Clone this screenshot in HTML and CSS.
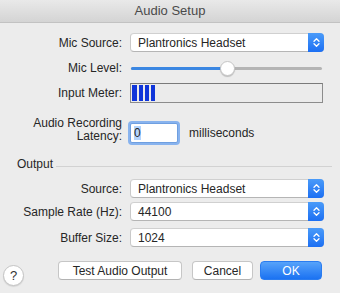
FILE: index.html
```html
<!DOCTYPE html>
<html lang="en">
<head>
    <meta charset="UTF-8">
    <meta name="viewport" content="width=device-width, initial-scale=1.0">
    <title>Audio Setup</title>
    <link rel="stylesheet" href="styles.css">
</head>
<body>
    <div class="window">
        <header class="titlebar">Audio Setup</header>

        <div class="content">
            <div class="row row-source">
                <label class="label">Mic Source:</label>
                <div class="popup">
                    <span class="popup-text">Plantronics Headset</span>
                    <span class="popup-arrows">
                        <svg width="7" height="11" viewBox="0 0 7 11"><path d="M1 4.2 L3.5 1.7 L6 4.2 M1 6.8 L3.5 9.3 L6 6.8" fill="none" stroke="#fff" stroke-width="1.3" stroke-linecap="round" stroke-linejoin="round"/></svg>
                    </span>
                </div>
            </div>

            <div class="row row-level">
                <label class="label">Mic Level:</label>
                <div class="slider">
                    <div class="slider-fill" style="width: 50%"></div>
                    <div class="slider-knob" style="left: 50%"></div>
                </div>
            </div>

            <div class="row row-meter">
                <label class="label">Input Meter:</label>
                <div class="meter">
                    <span class="meter-bar"></span>
                    <span class="meter-bar"></span>
                    <span class="meter-bar"></span>
                    <span class="meter-bar"></span>
                </div>
            </div>

            <div class="row row-latency">
                <label class="label label-two">Audio Recording<br>Latency:</label>
                <div class="latency">
                    <div class="text-field"><span class="selected">0</span></div>
                    <span class="unit">milliseconds</span>
                </div>
            </div>

            <div class="section-title">
                <span>Output</span>
                <span class="section-rule"></span>
            </div>

            <div class="row row-out">
                <label class="label">Source:</label>
                <div class="popup">
                    <span class="popup-text">Plantronics Headset</span>
                    <span class="popup-arrows">
                        <svg width="7" height="11" viewBox="0 0 7 11"><path d="M1 4.2 L3.5 1.7 L6 4.2 M1 6.8 L3.5 9.3 L6 6.8" fill="none" stroke="#fff" stroke-width="1.3" stroke-linecap="round" stroke-linejoin="round"/></svg>
                    </span>
                </div>
            </div>

            <div class="row row-rate">
                <label class="label">Sample Rate (Hz):</label>
                <div class="popup">
                    <span class="popup-text">44100</span>
                    <span class="popup-arrows">
                        <svg width="7" height="11" viewBox="0 0 7 11"><path d="M1 4.2 L3.5 1.7 L6 4.2 M1 6.8 L3.5 9.3 L6 6.8" fill="none" stroke="#fff" stroke-width="1.3" stroke-linecap="round" stroke-linejoin="round"/></svg>
                    </span>
                </div>
            </div>

            <div class="row row-buffer">
                <label class="label">Buffer Size:</label>
                <div class="popup">
                    <span class="popup-text">1024</span>
                    <span class="popup-arrows">
                        <svg width="7" height="11" viewBox="0 0 7 11"><path d="M1 4.2 L3.5 1.7 L6 4.2 M1 6.8 L3.5 9.3 L6 6.8" fill="none" stroke="#fff" stroke-width="1.3" stroke-linecap="round" stroke-linejoin="round"/></svg>
                    </span>
                </div>
            </div>

            <div class="footer">
                <button class="help-button">?</button>
                <div class="buttons">
                    <button class="button button-test">Test Audio Output</button>
                    <button class="button button-cancel">Cancel</button>
                    <button class="button button-ok">OK</button>
                </div>
            </div>
        </div>
    </div>
</body>
</html>
```

FILE: styles.css
```css
body {
    margin: 0;
    padding: 0;
    background: #ececec;
    font-family: 'Liberation Sans', Helvetica, Arial, sans-serif;
    font-size: 12px;
    color: #262626;
}

.window {
    width: 340px;
    height: 293px;
    overflow: hidden;
}

.titlebar {
    height: 22px;
    line-height: 22px;
    text-align: center;
    font-size: 13px;
    color: #4a4a4a;
    background: linear-gradient(#e9e9e9, #d4d4d4);
    border-bottom: 1px solid #c2c2c2;
}

.content {
    padding-top: 10px;
}

.row {
    display: grid;
    grid-template-columns: 122px 194px;
    column-gap: 8px;
    align-items: center;
}

.label {
    text-align: right;
    white-space: nowrap;
}

.row-source { height: 19px; }
.row-level { height: 16px; margin-top: 8px; }
.row-meter { height: 20px; margin-top: 7px; }
.row-latency { height: 30px; margin-top: 11px; align-items: end; }
.row-out { height: 19px; margin-top: 8px; }
.row-rate { height: 19px; margin-top: 4px; }
.row-buffer { height: 19px; margin-top: 7px; }

/* popup button */
.popup {
    height: 19px;
    box-sizing: border-box;
    display: flex;
    align-items: center;
    background: #fff;
    border: 1px solid #c9c9c9;
    border-top-color: #d0d0d0;
    border-bottom-color: #b5b5b5;
    border-radius: 4px;
}

.popup-text {
    flex: 1;
    padding-left: 7px;
}

.popup-arrows {
    width: 16px;
    height: 19px;
    margin: -1px -1px -1px 0;
    display: flex;
    align-items: center;
    justify-content: center;
    background: linear-gradient(#4a9bf9, #1c6ff3);
    border-radius: 0 4px 4px 0;
}

/* slider */
.slider {
    position: relative;
    height: 3px;
    margin: 0 2px 0 1px;
    background: #b4b4b4;
    border-radius: 2px;
}

.slider-fill {
    height: 3px;
    background: #3b87e2;
    border-radius: 2px;
}

.slider-knob {
    position: absolute;
    top: -6px;
    width: 15px;
    height: 15px;
    margin-left: -7px;
    box-sizing: border-box;
    background: #fff;
    border: 1px solid #c6c6c6;
    border-radius: 50%;
    box-shadow: 0 1px 1px rgba(0, 0, 0, 0.2);
}

/* meter */
.meter {
    height: 20px;
    box-sizing: border-box;
    display: flex;
    gap: 2px;
    padding: 1px 1px;
    border: 1px solid #8c8c8c;
    border-top-color: #7a7a7a;
    background: #ebebeb;
    margin-right: 1px;
}

.meter-bar {
    width: 4px;
    background: #0f35d9;
}

.meter-bar:first-child {
    width: 5px;
}

/* latency */
.latency {
    display: flex;
    align-items: center;
    padding-bottom: 1px;
}

.label-two {
    line-height: 13px;
    padding-bottom: 1px;
}

.text-field {
    width: 48px;
    height: 20px;
    box-sizing: border-box;
    padding: 2px 3px;
    background: #fff;
    border: 1px solid #6f9fe0;
    border-radius: 2px;
    box-shadow: 0 0 0 2px #88b3ee;
    line-height: 14px;
}

.selected {
    background: #b4d4fd;
}

.unit {
    margin-left: 11px;
}

/* section */
.section-title {
    display: flex;
    align-items: center;
    gap: 3px;
    margin: 13px 8px 0 17px;
    height: 14px;
}

.section-rule {
    flex: 1;
    height: 1px;
    background: #d2d2d2;
    margin-top: 5px;
}

/* footer */
.footer {
    display: flex;
    align-items: flex-start;
    margin-top: 14px;
    padding-left: 3px;
}

.help-button {
    width: 21px;
    height: 21px;
    padding: 0;
    margin-top: 4px;
    border: 1px solid #c4c4c4;
    border-radius: 50%;
    background: #fff;
    font-family: inherit;
    font-size: 13px;
    color: #333;
    box-shadow: 0 1px 1px rgba(0, 0, 0, 0.1);
}

.buttons {
    display: flex;
    gap: 10px;
    margin-left: 34px;
}

.button {
    height: 19px;
    padding: 0;
    font-family: inherit;
    font-size: 12px;
    color: #262626;
    background: #fff;
    border: 1px solid #c6c6c6;
    border-bottom-color: #b3b3b3;
    border-radius: 4px;
}

.button-test { width: 124px; }
.button-cancel { width: 61px; }

.button-ok {
    width: 62px;
    margin-left: -3px;
    color: #fff;
    border-color: #2a7cf0;
    background: linear-gradient(#57a3fa, #1b72f2);
}
```
